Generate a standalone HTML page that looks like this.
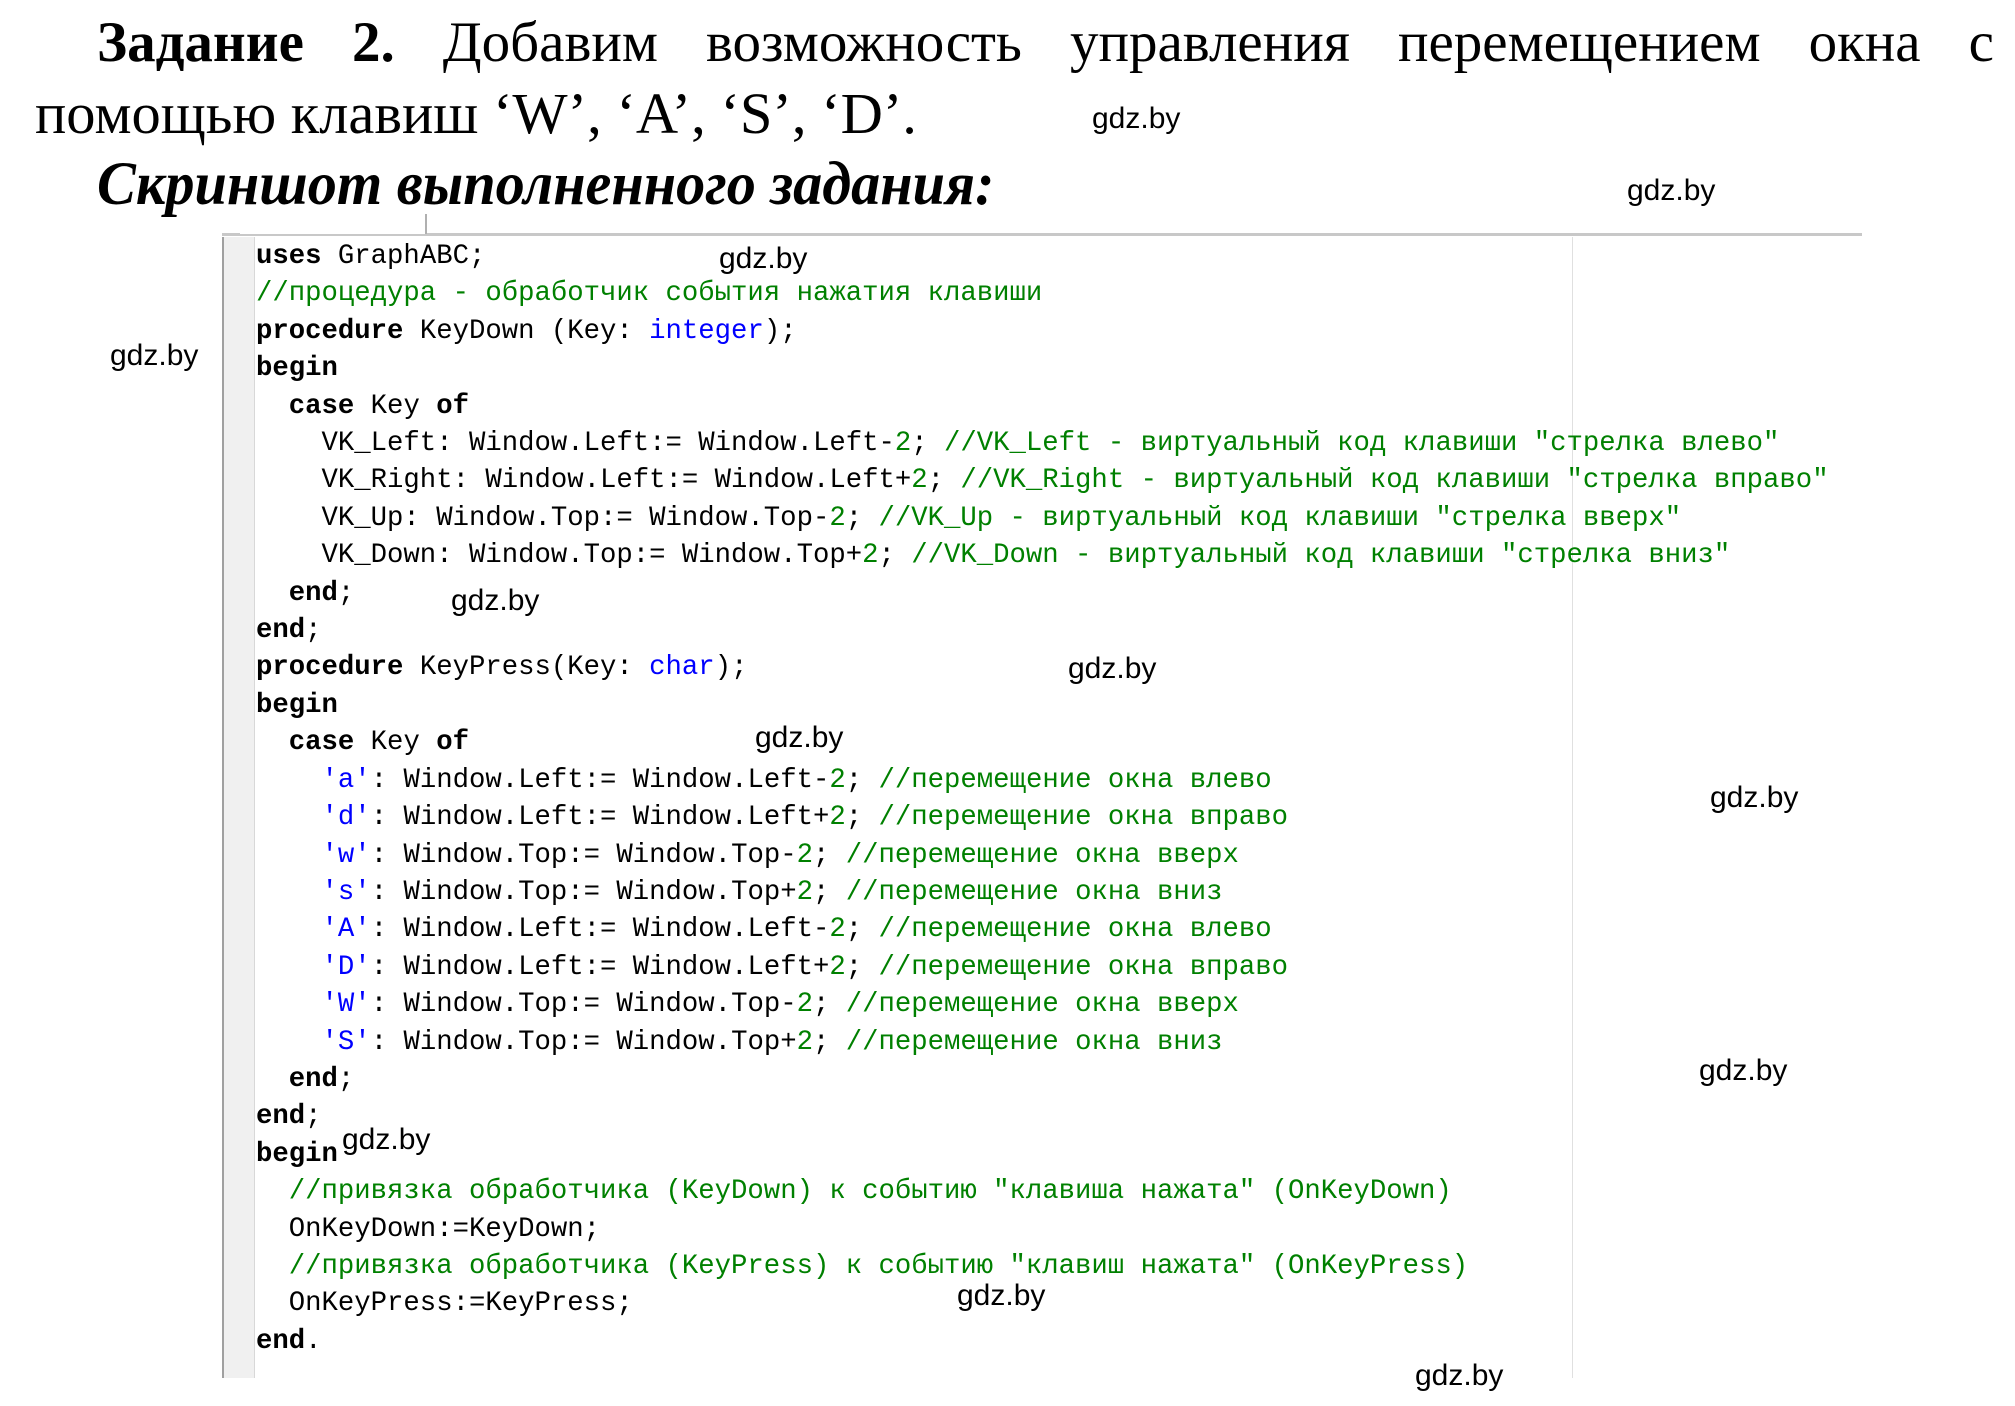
<!DOCTYPE html>
<html><head><meta charset="utf-8"><style>
body{margin:0;width:2015px;height:1406px;background:#fff;position:relative;overflow:hidden}
.s{position:absolute;font-family:"Liberation Serif",serif;color:#000;white-space:nowrap}
.l1{left:97px;width:1897px;top:10px;font-size:57px;display:flex;justify-content:space-between}
.l2{left:35px;top:80px;font-size:58.5px}
.l3{left:97px;top:150px;font-size:61px;font-weight:bold;font-style:italic;transform:scaleX(0.955);transform-origin:left}
.w{position:absolute;font-family:"Liberation Sans",sans-serif;font-size:30px;color:#000}
.gut{position:absolute;left:222px;top:237px;width:30px;height:1141px;background:#f0f0f0;border-left:2px solid #a0a0a0;border-right:1px solid #d8d8d8}
.topl{position:absolute;left:222px;top:233px;width:1640px;height:3px;background:#c8c8c8}
.tab{position:absolute;left:240px;top:214px;width:185px;height:20px;background:#fff;border-right:2px solid #b0b0b0}
.mar{position:absolute;left:1572px;top:237px;width:1px;height:1141px;background:#e0e0e0}
pre{position:absolute;left:256px;top:238px;margin:0;font-family:"Liberation Mono",monospace;font-size:27.3px;line-height:37.41px;color:#000}
b{font-weight:bold}.c{color:#008000}.k{color:#0000ff}.n{color:#008000}
</style></head><body>
<div class="s l1"><b>Задание</b><b>2.</b><span>Добавим</span><span>возможность</span><span>управления</span><span>перемещением</span><span>окна</span><span>с</span></div>
<div class="s l2">помощью клавиш ‘W’, ‘A’, ‘S’, ‘D’.</div>
<div class="s l3">Скриншот выполненного задания:</div>
<div class="topl"></div><div class="tab"></div>
<div class="gut"></div><div class="mar"></div>
<pre><b>uses</b> GraphABC;
<span class="c">//процедура - обработчик события нажатия клавиши</span>
<b>procedure</b> KeyDown (Key: <span class="k">integer</span>);
<b>begin</b>
  <b>case</b> Key <b>of</b>
    VK_Left: Window.Left:= Window.Left-<span class="n">2</span>; <span class="c">//VK_Left - виртуальный код клавиши "стрелка влево"</span>
    VK_Right: Window.Left:= Window.Left+<span class="n">2</span>; <span class="c">//VK_Right - виртуальный код клавиши "стрелка вправо"</span>
    VK_Up: Window.Top:= Window.Top-<span class="n">2</span>; <span class="c">//VK_Up - виртуальный код клавиши "стрелка вверх"</span>
    VK_Down: Window.Top:= Window.Top+<span class="n">2</span>; <span class="c">//VK_Down - виртуальный код клавиши "стрелка вниз"</span>
  <b>end</b>;
<b>end</b>;
<b>procedure</b> KeyPress(Key: <span class="k">char</span>);
<b>begin</b>
  <b>case</b> Key <b>of</b>
    <span class="k">'a'</span>: Window.Left:= Window.Left-<span class="n">2</span>; <span class="c">//перемещение окна влево</span>
    <span class="k">'d'</span>: Window.Left:= Window.Left+<span class="n">2</span>; <span class="c">//перемещение окна вправо</span>
    <span class="k">'w'</span>: Window.Top:= Window.Top-<span class="n">2</span>; <span class="c">//перемещение окна вверх</span>
    <span class="k">'s'</span>: Window.Top:= Window.Top+<span class="n">2</span>; <span class="c">//перемещение окна вниз</span>
    <span class="k">'A'</span>: Window.Left:= Window.Left-<span class="n">2</span>; <span class="c">//перемещение окна влево</span>
    <span class="k">'D'</span>: Window.Left:= Window.Left+<span class="n">2</span>; <span class="c">//перемещение окна вправо</span>
    <span class="k">'W'</span>: Window.Top:= Window.Top-<span class="n">2</span>; <span class="c">//перемещение окна вверх</span>
    <span class="k">'S'</span>: Window.Top:= Window.Top+<span class="n">2</span>; <span class="c">//перемещение окна вниз</span>
  <b>end</b>;
<b>end</b>;
<b>begin</b>
  <span class="c">//привязка обработчика (KeyDown) к событию "клавиша нажата" (OnKeyDown)</span>
  OnKeyDown:=KeyDown;
  <span class="c">//привязка обработчика (KeyPress) к событию "клавиш нажата" (OnKeyPress)</span>
  OnKeyPress:=KeyPress;
<b>end</b>.</pre>
<div class="w" style="left:1092px;top:102px">gdz.by</div>
<div class="w" style="left:1627px;top:174px">gdz.by</div>
<div class="w" style="left:719px;top:242px">gdz.by</div>
<div class="w" style="left:110px;top:339px">gdz.by</div>
<div class="w" style="left:451px;top:584px">gdz.by</div>
<div class="w" style="left:1068px;top:652px">gdz.by</div>
<div class="w" style="left:755px;top:721px">gdz.by</div>
<div class="w" style="left:1710px;top:781px">gdz.by</div>
<div class="w" style="left:1699px;top:1054px">gdz.by</div>
<div class="w" style="left:342px;top:1123px">gdz.by</div>
<div class="w" style="left:957px;top:1279px">gdz.by</div>
<div class="w" style="left:1415px;top:1359px">gdz.by</div>
</body></html>
